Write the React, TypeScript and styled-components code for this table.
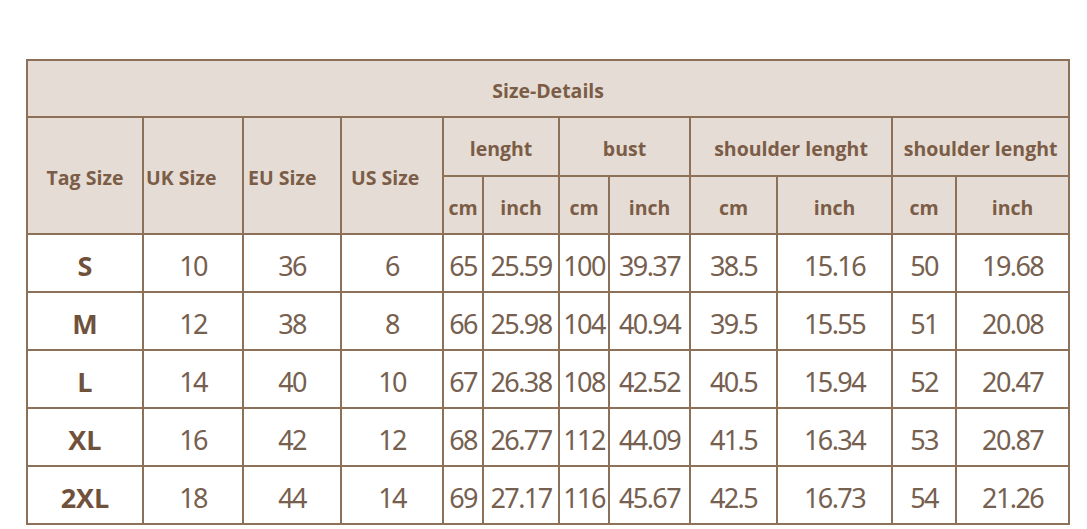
import React from 'react';
import styled, { createGlobalStyle } from 'styled-components';

const GlobalStyle = createGlobalStyle`
  html, body {
    margin: 0;
    padding: 0;
    background: #ffffff;
  }
`;

const Page = styled.div`
  width: 1087px;
  height: 529px;
  overflow: hidden;
  box-sizing: border-box;
  padding: 59px 0 0 26px;
`;

const Table = styled.table`
  border-collapse: collapse;
  table-layout: fixed;
  width: 1042px;
  font-family: "Open Sans", "Noto Sans", sans-serif;
`;

const HeadRow = styled.tr<{ $h: number }>`
  height: ${p => p.$h}px;
`;

const HeadCell = styled.th<{ $align?: 'left' | 'center'; $pad?: number }>`
  background: #e5ddd5;
  border: 2px solid #8c7158;
  color: #7b5c46;
  font-size: 19.5px;
  font-weight: 700;
  text-align: ${p => p.$align || 'center'};
  padding: 4px 0 0 ${p => p.$pad || 0}px;
  white-space: nowrap;
  overflow: hidden;
`;

const DataRow = styled.tr`
  height: 58px;
`;

const TagCell = styled.td`
  border: 2px solid #8c7158;
  color: #70513b;
  font-family: "Open Sans", sans-serif;
  font-weight: 700;
  font-size: 27px;
  text-align: center;
  padding: 4px 0 0;
`;

const NumCell = styled.td`
  border: 2px solid #8c7158;
  color: #76604f;
  font-family: "Noto Sans", sans-serif;
  font-size: 27px;
  letter-spacing: -1.6px;
  text-align: center;
  padding: 4px 0 0;
  white-space: nowrap;
  overflow: hidden;
`;

const widths = [116, 100, 98, 102, 40, 76, 50, 81, 87, 115, 64, 113];

const rows = [
  ['S', '10', '36', '6', '65', '25.59', '100', '39.37', '38.5', '15.16', '50', '19.68'],
  ['M', '12', '38', '8', '66', '25.98', '104', '40.94', '39.5', '15.55', '51', '20.08'],
  ['L', '14', '40', '10', '67', '26.38', '108', '42.52', '40.5', '15.94', '52', '20.47'],
  ['XL', '16', '42', '12', '68', '26.77', '112', '44.09', '41.5', '16.34', '53', '20.87'],
  ['2XL', '18', '44', '14', '69', '27.17', '116', '45.67', '42.5', '16.73', '54', '21.26'],
];

export default function App() {
  return (
    <Page>
      <GlobalStyle />
      <Table>
        <colgroup>
          {widths.map((w, i) => <col key={i} style={{ width: w }} />)}
        </colgroup>
        <thead>
          <HeadRow $h={57}>
            <HeadCell colSpan={12}>Size-Details</HeadCell>
          </HeadRow>
          <HeadRow $h={59}>
            <HeadCell rowSpan={2}>Tag Size</HeadCell>
            <HeadCell rowSpan={2} $align="left" $pad={2}>UK Size</HeadCell>
            <HeadCell rowSpan={2} $align="left" $pad={4}>EU Size</HeadCell>
            <HeadCell rowSpan={2} $align="left" $pad={9}>US Size</HeadCell>
            <HeadCell colSpan={2}>lenght</HeadCell>
            <HeadCell colSpan={2}>bust</HeadCell>
            <HeadCell colSpan={2}>shoulder lenght</HeadCell>
            <HeadCell colSpan={2}>shoulder lenght</HeadCell>
          </HeadRow>
          <HeadRow $h={58}>
            <HeadCell>cm</HeadCell>
            <HeadCell>inch</HeadCell>
            <HeadCell>cm</HeadCell>
            <HeadCell>inch</HeadCell>
            <HeadCell>cm</HeadCell>
            <HeadCell>inch</HeadCell>
            <HeadCell>cm</HeadCell>
            <HeadCell>inch</HeadCell>
          </HeadRow>
        </thead>
        <tbody>
          {rows.map(r => (
            <DataRow key={r[0]}>
              <TagCell>{r[0]}</TagCell>
              {r.slice(1).map((v, i) => <NumCell key={i}>{v}</NumCell>)}
            </DataRow>
          ))}
        </tbody>
      </Table>
    </Page>
  );
}
